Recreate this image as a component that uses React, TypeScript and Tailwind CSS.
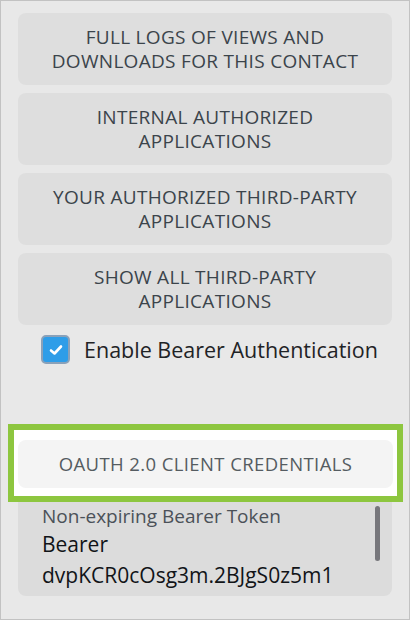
import React from "react";

const Btn = ({ children }: { children: React.ReactNode }) => (
  <div className="h-[72px] rounded-lg bg-[#dedede] flex items-center justify-center text-center text-[19px] leading-[24px] tracking-[0.3px] text-[#3b444b] uppercase">
    {children}
  </div>
);

export default function App() {
  return (
    <div
      className="w-[410px] h-[620px] border border-[#c2c2c2] bg-[#e8e8e8] overflow-hidden flex flex-col"
      style={{ fontFamily: '"Open Sans", "Noto Sans", sans-serif' }}
    >
      <div className="px-[17px] pt-[12px] flex flex-col gap-2">
        <Btn>
          Full logs of views and
          <br />
          downloads for this contact
        </Btn>
        <Btn>
          Internal authorized
          <br />
          applications
        </Btn>
        <Btn>
          Your authorized third-party
          <br />
          applications
        </Btn>
        <Btn>
          Show all third-party
          <br />
          applications
        </Btn>
      </div>
      <div className="flex items-center mt-[10px] pl-[40px] gap-[14px]">
        <div className="w-[29px] h-[29px] rounded-[5px] bg-[#2e9de8] border-2 border-[#8aa1b9] flex items-center justify-center">
          <svg width="14" height="12" viewBox="0 0 14 12">
            <path d="M2 6.5 L5.5 9.5 L12 2.5" fill="none" stroke="white" strokeWidth="2.6" strokeLinecap="round" strokeLinejoin="round" />
          </svg>
        </div>
        <span className="text-[21.5px] leading-[28px] text-[#1f2326] whitespace-nowrap">Enable Bearer Authentication</span>
      </div>
      <div className="mt-[60px] ml-[7px] w-[395px] border-[6px] border-[#8dc63f] bg-white px-[4px] pt-[10px] pb-[8px]">
        <div className="h-[48px] rounded-lg bg-[#f4f4f4] flex items-center justify-center text-[18.5px] tracking-[0.4px] text-[#555c61] uppercase whitespace-nowrap">
          OAuth 2.0 Client Credentials
        </div>
      </div>
      <div className="relative mx-[17px] h-[94px] rounded-b-lg bg-[#dcdcdc] overflow-hidden pl-[24px] pr-[30px] pt-[1px]">
        <div className="text-[19px] leading-[26px] text-[#4b5158] whitespace-nowrap">Non-expiring Bearer Token</div>
        <div className="text-[21px] leading-[31px] text-[#111418] whitespace-nowrap">
          Bearer
          <br />
          dvpKCR0cOsg3m.2BJgS0z5m1
          <br />
          ltrwiduymoidqofkmentl
        </div>
        <div className="absolute right-[12px] top-[4px] w-[5px] h-[55px] rounded-full bg-[#77777c]" />
      </div>
    </div>
  );
}
